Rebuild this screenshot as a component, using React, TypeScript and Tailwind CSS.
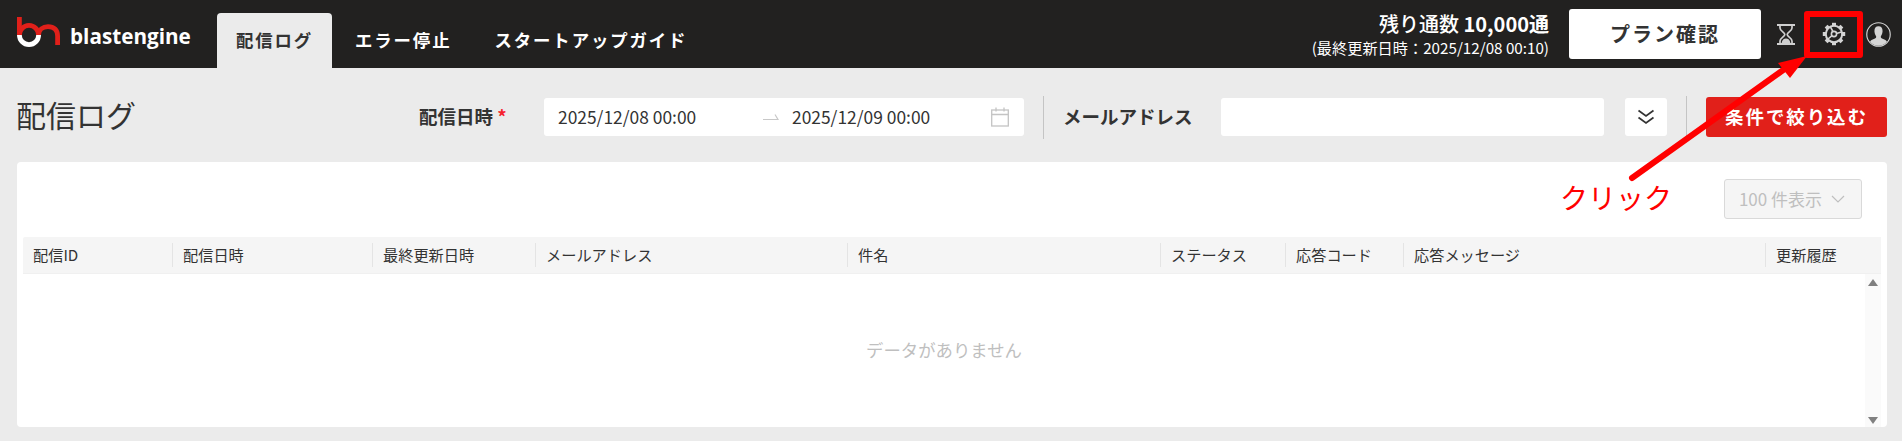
import React from "react";

const cols = [
  { t: "配信ID", w: "w-[150px]", first: true },
  { t: "配信日時", w: "w-[200px]" },
  { t: "最終更新日時", w: "w-[163px]" },
  { t: "メールアドレス", w: "w-[312px]" },
  { t: "件名", w: "w-[313px]" },
  { t: "ステータス", w: "w-[125px]" },
  { t: "応答コード", w: "w-[118px]" },
  { t: "応答メッセージ", w: "w-[362px]" },
  { t: "更新履歴", w: "w-[99px]" },
];

function Logo() {
  return (
    <svg width="46" height="31" viewBox="0 0 46 31" className="shrink-0">
      <path d="M2.4 0V18" stroke="#e1201a" strokeWidth="4.8" fill="none" />
      <path d="M2.4 18A9.6 9.6 0 0 1 21.6 18" stroke="#e1201a" strokeWidth="4.8" fill="none" />
      <path d="M2.4 18A9.6 9.6 0 0 0 21.6 18" stroke="#ffffff" strokeWidth="4.8" fill="none" />
      <path d="M21.6 18C21.6 12.5 26 9.6 31 9.6C37 9.6 40.6 13 40.6 19V28" stroke="#e1201a" strokeWidth="4.8" fill="none" />
    </svg>
  );
}

function Hourglass() {
  return (
    <svg width="18" height="21" viewBox="0 0 18 21" fill="none" stroke="#cfcfcf" strokeWidth="1.7">
      <path d="M0 1H18M0 20H18" strokeWidth="2" />
      <path d="M3 1V4C3 7 7.8 8.5 7.8 10.5C7.8 12.5 3 14 3 17V20" />
      <path d="M15 1V4C15 7 10.2 8.5 10.2 10.5C10.2 12.5 15 14 15 17V20" />
      <path d="M4.6 19C5 16 7 14.6 9 14.6C11 14.6 13 16 13.4 19Z" fill="#cfcfcf" stroke="none" />
    </svg>
  );
}

function Gear() {
  const teeth = [0, 45, 90, 135, 180, 225, 270, 315];
  return (
    <svg width="24" height="24" viewBox="0 0 24 24" fill="none" stroke="#d4d4d4">
      <circle cx="12" cy="12" r="8.2" strokeWidth="2" />
      {teeth.map((a) => (
        <rect key={a} x="10" y="0.8" width="4" height="3.4" fill="#d4d4d4" stroke="none" transform={`rotate(${a} 12 12)`} />
      ))}
      <circle cx="12" cy="12" r="2.6" strokeWidth="1.6" />
      <path d="M14.4 11.4L19.5 10M10 13.7L6 17M11 9.6L8.5 5" strokeWidth="1.6" />
    </svg>
  );
}

function UserIcon() {
  return (
    <svg width="25" height="25" viewBox="0 0 26 26">
      <circle cx="13" cy="13" r="12.2" fill="#222120" stroke="#d4d4d4" strokeWidth="1.2" />
      <path d="M13 4.5C9.8 4.5 8.6 7 8.8 10C9 12.5 10 14 10.6 15C10.8 16.6 9.5 17.3 7.5 18C5.8 18.6 4.8 19.4 4.2 20.6A11.3 11.3 0 0 0 21.8 20.6C21.2 19.4 20.2 18.6 18.5 18C16.5 17.3 15.2 16.6 15.4 15C16 14 17 12.5 17.2 10C17.4 7 16.2 4.5 13 4.5Z" fill="#d4d4d4" />
    </svg>
  );
}

function CalendarIcon() {
  return (
    <svg width="18" height="20" viewBox="0 0 18 20" fill="none" stroke="#c4c4c4" strokeWidth="1.3">
      <rect x="0.7" y="3" width="16.6" height="16" />
      <path d="M0.7 7.5H17.3M5 0.5V4.5M13 0.5V4.5" />
    </svg>
  );
}

export default function App() {
  return (
    <div className="relative h-[441px] w-full overflow-hidden bg-[#ebebeb] font-['Noto_Sans_CJK_JP',sans-serif] text-[#333333]">
      <header className="flex h-[68px] items-stretch bg-[#222120] text-white">
        <div className="ml-[17px] flex h-full w-[200px] shrink-0 items-start pt-[17px]">
          <Logo />
          <span className="ml-[7px] mt-[7px] font-['Open_Sans',sans-serif] text-[20.7px] font-bold leading-[24px] text-white">blastengine</span>
        </div>
        <nav className="flex items-end">
          <div className="flex h-[55px] w-[115px] items-center justify-center rounded-t-[4px] bg-[#ebebeb] text-[17.4px] font-bold tracking-[1.9px] text-[#333333]">配信ログ</div>
          <div className="ml-[23px] flex h-[55px] items-center text-[17.4px] font-bold tracking-[1.9px]">エラー停止</div>
          <div className="ml-[43px] flex h-[55px] items-center text-[17.4px] font-bold tracking-[1.9px]">スタートアップガイド</div>
        </nav>
        <div className="ml-auto flex items-center pr-[10px]">
          <div className="-mt-[2px] flex flex-col items-end">
            <div className="text-[20px] font-medium leading-[26px]">残り通数 <span className="font-bold">10,000通</span></div>
            <div className="mt-[1px] text-[15.2px] leading-[18px]">(最終更新日時：2025/12/08 00:10)</div>
          </div>
          <div className="ml-[20px] flex h-[50px] w-[192px] items-center justify-center rounded-[3px] bg-white text-[20px] font-bold tracking-[2px] text-[#333333]">プラン確認</div>
          <div className="ml-[16px] flex w-[18px] justify-center"><Hourglass /></div>
          <div className="ml-[9px] flex h-[47px] w-[59px] items-center justify-center rounded-[3px] border-[6px] border-[#ff0000]"><Gear /></div>
          <div className="ml-[3px] mr-[1px]"><UserIcon /></div>
        </div>
      </header>

      <div className="flex h-[94px] items-center pl-[16px] pr-[15px] pt-[4px]">
        <h1 className="-mt-[6px] w-[403px] shrink-0 text-[30px] font-normal leading-[40px]">配信ログ</h1>
        <div className="w-[125px] shrink-0 text-[18.5px] font-bold">配信日時 <span className="text-[#f5222d]">*</span></div>
        <div className="flex h-[38px] w-[480px] shrink-0 items-center rounded-[3px] bg-white pl-[14px] text-[17.4px]">
          <span className="w-[205px]">2025/12/08 00:00</span>
          <svg width="16" height="8" viewBox="0 0 16 8" fill="none" stroke="#c8c8c8" strokeWidth="1.2"><path d="M0 6.5H15L12 1.5" /></svg>
          <span className="ml-[13px] w-[199px]">2025/12/09 00:00</span>
          <CalendarIcon />
        </div>
        <div className="ml-[19px] h-[43px] w-px shrink-0 bg-[#c4c4c4]" />
        <div className="ml-[19px] w-[158px] shrink-0 text-[18.5px] font-bold">メールアドレス</div>
        <div className="h-[38px] w-[383px] shrink-0 rounded-[3px] bg-white" />
        <div className="ml-[21px] flex h-[38px] w-[42px] shrink-0 items-center justify-center rounded-[3px] bg-white">
          <svg width="18" height="18" viewBox="0 0 18 18" fill="none" stroke="#333333" strokeWidth="1.7"><path d="M1.5 2.5L9 8L16.5 2.5M1.5 9.5L9 15L16.5 9.5" /></svg>
        </div>
        <div className="ml-[19px] h-[43px] w-px shrink-0 bg-[#c4c4c4]" />
        <div className="ml-[19px] flex h-[40px] w-[181px] shrink-0 items-center justify-center rounded-[3px] bg-[#e1201a] text-[18.5px] font-bold tracking-[1.9px] text-white">条件で絞り込む</div>
      </div>

      <main className="ml-[17px] mr-[15px] flex h-[265px] flex-col rounded-[4px] bg-white pl-[6px] pr-[6px]">
        <div className="flex h-[75px] justify-end pr-[19px] pt-[17px]">
          <div className="flex h-[40px] w-[138px] items-center justify-center gap-[9px] rounded-[3px] border border-[#d9d9d9] bg-[#f5f5f5] pr-[2px] text-[17px] text-[#bfbfbf]">
            100 件表示
            <svg width="14" height="8" viewBox="0 0 14 8" fill="none" stroke="#bfbfbf" strokeWidth="1.2"><path d="M1 1L7 7L13 1" /></svg>
          </div>
        </div>
        <div className="flex h-[37px] shrink-0 items-center rounded-t-[2px] border-b border-[#f0f0f0] bg-[#f5f5f5] text-[15.2px]">
          {cols.map((c) => (
            <div key={c.t} className={`${c.w} relative flex h-full shrink-0 items-center pb-[2px] pl-[10px]`}>
              {c.t}
              {c.t !== "更新履歴" && <span className="absolute right-0 top-[6px] h-[24px] w-px bg-[#e4e4e4]" />}
            </div>
          ))}
          <div className="h-full flex-1 bg-[#f5f5f5]" />
        </div>
        <div className="flex min-h-0 flex-1">
          <div className="flex flex-1 items-center justify-center text-[17.4px] text-[#bfbfbf]">データがありません</div>
          <div className="flex w-[16px] flex-col items-center justify-between bg-[#fafafa] pb-[3px] pt-[5px]">
            <svg width="10" height="7" viewBox="0 0 10 7"><path d="M5 0L10 7H0Z" fill="#808080" /></svg>
            <svg width="10" height="7" viewBox="0 0 10 7"><path d="M5 7L10 0H0Z" fill="#808080" /></svg>
          </div>
        </div>
      </main>

      <svg className="pointer-events-none absolute left-0 top-0" width="1902" height="441" fill="none">
        <path d="M1632 178L1786 68" stroke="#ff0000" strokeWidth="6" strokeLinecap="round" />
        <path d="M1807 56L1778 63L1790 78Z" fill="#ff0000" />
      </svg>
      <div className="absolute left-[1560px] top-[177px] text-[28px] leading-[40px] text-[#ff0000]">クリック</div>
    </div>
  );
}
